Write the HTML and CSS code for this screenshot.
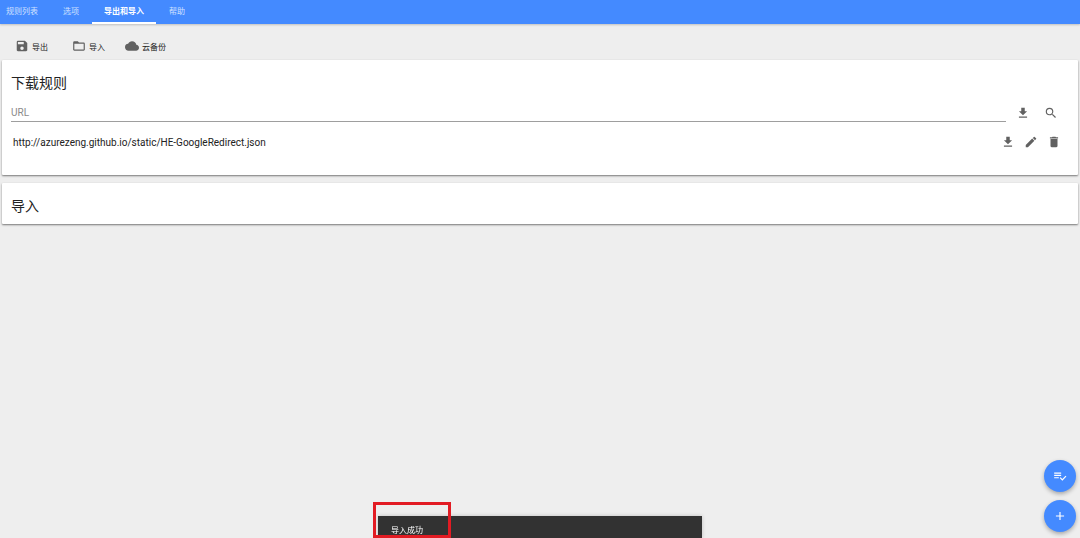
FILE: index.html
```html
<!DOCTYPE html>
<html>
<head>
	<meta charset="utf-8" />
	<title>Header Editor</title>
	<link rel="stylesheet" href="styles.css">
</head>
<body>
<svg class="sprite">
	<symbol id="save" viewBox="0 0 24 24"><path d="M17 3H5a2 2 0 0 0-2 2v14c0 1.100.900 2 2 2h14c1.100 0 2-.900 2-2V7l-4-4zm-5 16a3 3 0 1 1 0-6 3 3 0 0 1 0 6zm3-10H5V5h10v4z"/></symbol>
	<symbol id="folder" viewBox="0 0 24 24"><path d="M20 6h-8l-2-2H4a2 2 0 0 0-2 2v12c0 1.100.900 2 2 2h16c1.100 0 2-.900 2-2V8a2 2 0 0 0-2-2zm0 12H4V8h16v10z"/></symbol>
	<symbol id="cloud" viewBox="0 0 24 24"><path d="M19.350 10.040A7.490 7.490 0 0 0 12 4C9.110 4 6.600 5.640 5.350 8.040A5.994 5.994 0 0 0 0 14c0 3.310 2.690 6 6 6h13c2.760 0 5-2.240 5-5 0-2.640-2.050-4.780-4.650-4.960z"/></symbol>
	<symbol id="download" viewBox="0 0 24 24"><path d="M19 9h-4V3H9v6H5l7 7 7-7zM5 18v2h14v-2H5z"/></symbol>
	<symbol id="search" viewBox="0 0 24 24"><path d="M15.500 14h-.790l-.280-.270A6.471 6.471 0 0 0 16 9.500 6.500 6.500 0 1 0 9.500 16c1.610 0 3.090-.590 4.230-1.570l.270.280v.790l5 4.990L20.490 19l-4.990-5zm-6 0a4.500 4.500 0 1 1 0-9 4.500 4.500 0 0 1 0 9z"/></symbol>
	<symbol id="edit" viewBox="0 0 24 24"><path d="M3 17.250V21h3.750L17.810 9.940l-3.750-3.750L3 17.250zM20.710 7.040a1 1 0 0 0 0-1.410l-2.340-2.340a1 1 0 0 0-1.410 0l-1.830 1.830 3.750 3.750 1.830-1.830z"/></symbol>
	<symbol id="delete" viewBox="0 0 24 24"><path d="M6 19c0 1.100.900 2 2 2h8c1.100 0 2-.900 2-2V7H6v12zM19 4h-3.500l-1-1h-5l-1 1H5v2h14V4z"/></symbol>
	<symbol id="check-list" viewBox="0 0 24 24"><path d="M14 10H2v2h12v-2zm0-4H2v2h12V6zM2 16h8v-2H2v2zm19.500-4.500L23 13l-6.990 7-4.510-4.500L13 14l3.010 3 5.490-5.500z"/></symbol>
	<symbol id="add" viewBox="0 0 24 24"><path d="M19 13h-6v6h-2v-6H5v-2h6V5h2v6h6v2z"/></symbol>
</svg>

<nav class="tabs">
	<a href="#rules">规则列表</a>
	<a href="#options">选项</a>
	<a href="#export" class="active">导出和导入</a>
	<a href="#help">帮助</a>
</nav>

<main>
	<div class="toolbar">
		<button><svg><use href="#save"/></svg>导出</button>
		<button><svg><use href="#folder"/></svg>导入</button>
		<button><svg><use href="#cloud"/></svg>云备份</button>
	</div>

	<section class="card download-card">
		<h2>下载规则</h2>
		<form class="url-row">
			<input type="text" placeholder="URL" aria-label="URL">
			<button type="button" aria-label="下载"><svg><use href="#download"/></svg></button>
			<button type="button" aria-label="查看"><svg><use href="#search"/></svg></button>
		</form>
		<div class="history">
			<span>http://azurezeng.github.io/static/HE-GoogleRedirect.json</span>
			<button aria-label="下载"><svg><use href="#download"/></svg></button>
			<button aria-label="编辑"><svg><use href="#edit"/></svg></button>
			<button aria-label="删除"><svg><use href="#delete"/></svg></button>
		</div>
	</section>

	<section class="card">
		<h2>导入</h2>
	</section>
</main>

<div class="fabs">
	<button aria-label="批量"><svg><use href="#check-list"/></svg></button>
	<button aria-label="添加"><svg><use href="#add"/></svg></button>
</div>

<div class="toast">导入成功</div>
<div class="highlight"></div>
</body>
</html>
```

FILE: styles.css
```css
*{
	box-sizing: border-box;
}
body{
	margin: 0;
	min-height: 100vh;
	background: #eee;
	color: #222;
	font-family: Roboto, "Noto Sans CJK SC", sans-serif;
	font-size: 8px;
}
button{
	border: 0;
	padding: 0;
	background: none;
	color: inherit;
	font: inherit;
	cursor: pointer;
}
svg{
	display: block;
	width: 14px;
	height: 14px;
	fill: #616161;
}
.sprite{
	display: none;
}

.tabs{
	display: flex;
	gap: 1px;
	height: 24px;
	background: #448aff;
	box-shadow: 0 1px 2px rgba(0,0,0,.2);
}
.tabs a{
	padding: 1px 12px 0;
	color: #d0e1ff;
	line-height: 21px;
	text-decoration: none;
}
.tabs a:first-child{
	padding-left: 6px;
}
.tabs .active{
	border-bottom: 2px solid #fff;
	color: #fff;
	font-weight: bold;
}

main{
	padding: 0 2px;
}
.toolbar{
	display: flex;
	padding: 14px 1px 6px;
}
.toolbar button{
	display: flex;
	align-items: center;
	justify-content: center;
	gap: 3px;
	width: 57px;
	height: 16px;
}

.card{
	margin-bottom: 8px;
	padding: 13px 9px 8px;
	background: #fff;
	border-radius: 1px;
	box-shadow: 0 1px 2px rgba(0,0,0,.5);
}
.download-card{
	padding-bottom: 18px;
}
h2{
	margin: 0;
	font-size: 14px;
	font-weight: normal;
	line-height: 20px;
}
.url-row, .history{
	display: flex;
	align-items: center;
	padding-right: 4px;
	font-size: 10px;
}
.url-row button, .history button{
	display: grid;
	place-items: center;
}
.url-row{
	margin-top: 10px;
}
.url-row button{
	width: 28px;
}
.url-row input{
	flex: 1;
	min-width: 0;
	height: 19px;
	margin-right: 3px;
	border: 0;
	border-bottom: 1px solid #9e9e9e;
	padding: 0;
	background: none;
	font: inherit;
	outline: none;
}
.url-row input::placeholder{
	color: #8a8a8a;
}
.history{
	height: 30px;
	margin-top: 5px;
	padding-left: 2px;
}
.history button{
	width: 23px;
}
.history span{
	flex: 1;
}

.fabs{
	position: fixed;
	right: 4px;
	bottom: 6px;
	display: grid;
	gap: 8px;
}
.fabs button{
	display: grid;
	place-items: center;
	width: 32px;
	height: 32px;
	border-radius: 50%;
	background: #448aff;
	box-shadow: 0 2px 4px rgba(0,0,0,.3);
}
.fabs svg{
	fill: #fff;
}

.toast{
	position: fixed;
	bottom: 0;
	left: 35%;
	width: 30%;
	height: 22px;
	padding: 9px 13px 0;
	background: #323232;
	color: #fff;
	line-height: 12px;
	box-shadow: 0 0 4px rgba(0,0,0,.2);
}
.highlight{
	position: fixed;
	bottom: 0;
	left: 373px;
	width: 78px;
	height: 36px;
	border: 3px solid #e21b23;
}
```
